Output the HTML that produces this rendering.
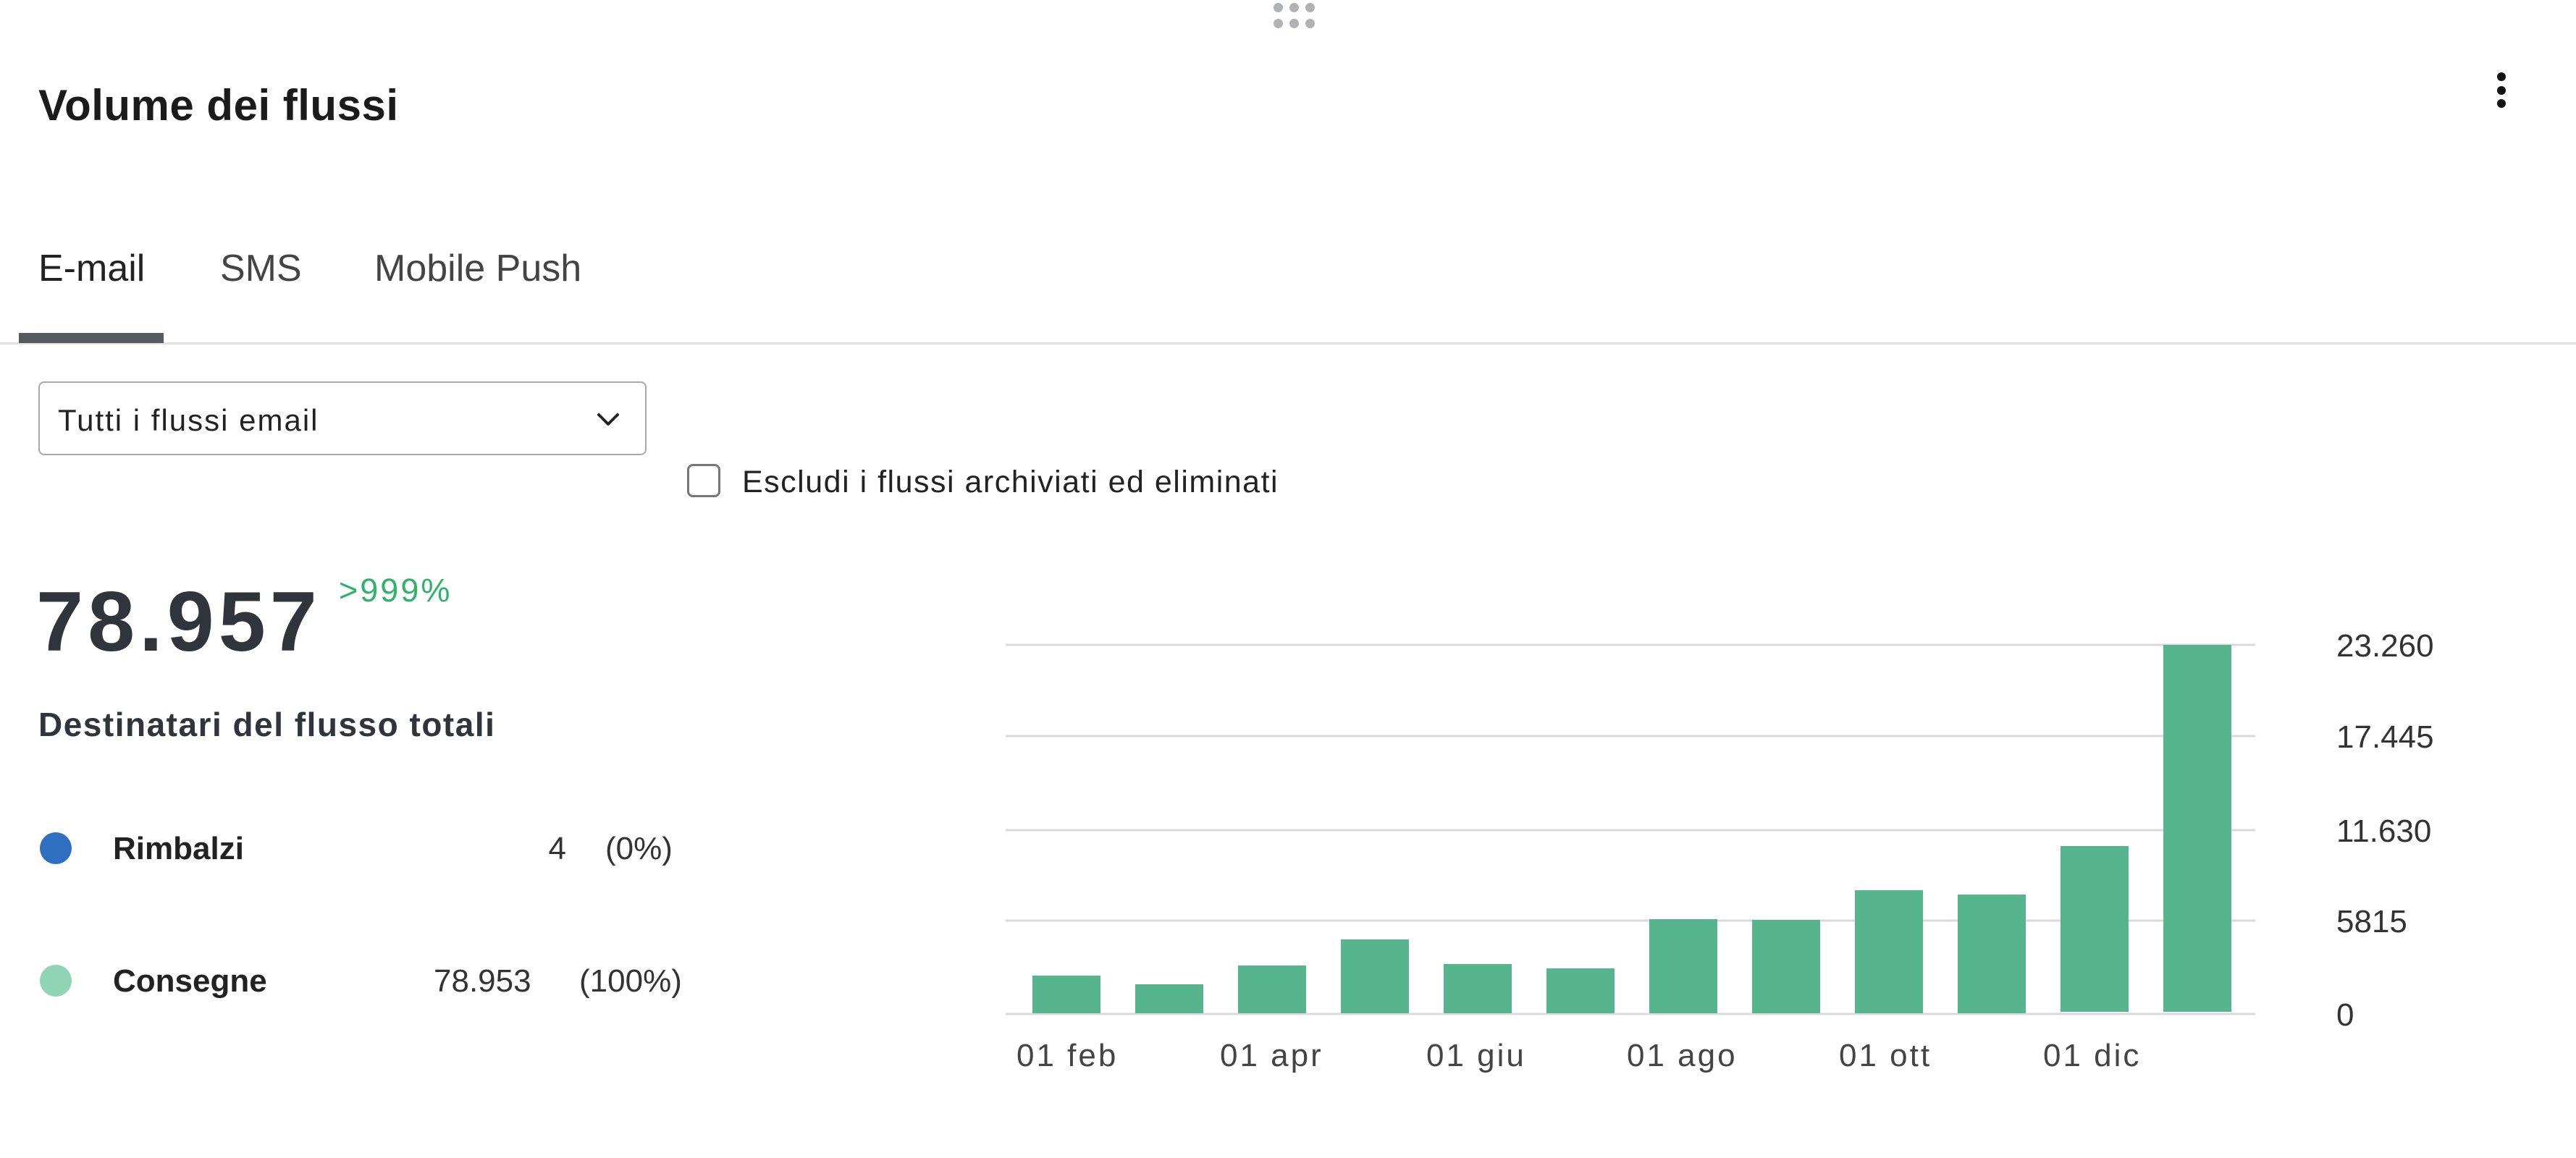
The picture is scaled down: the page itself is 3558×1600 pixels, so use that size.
<!DOCTYPE html>
<html><head><meta charset="utf-8"><style>
html,body{margin:0;padding:0;background:#fff;}
body{width:3558px;height:1600px;position:relative;overflow:hidden;font-family:"Liberation Sans",sans-serif;color:#222;}
.a{position:absolute;line-height:1;white-space:nowrap;}
.dot{position:absolute;border-radius:50%;}
</style></head><body>
<div class="dot" style="left:1759px;top:4px;width:13px;height:13px;background:#b0b2b5"></div>
<div class="dot" style="left:1781px;top:4px;width:13px;height:13px;background:#b0b2b5"></div>
<div class="dot" style="left:1803px;top:4px;width:13px;height:13px;background:#b0b2b5"></div>
<div class="dot" style="left:1759px;top:26px;width:13px;height:13px;background:#b0b2b5"></div>
<div class="dot" style="left:1781px;top:26px;width:13px;height:13px;background:#b0b2b5"></div>
<div class="dot" style="left:1803px;top:26px;width:13px;height:13px;background:#b0b2b5"></div>
<div class="dot" style="left:3449px;top:100px;width:12px;height:12px;background:#111"></div>
<div class="dot" style="left:3449px;top:119px;width:12px;height:12px;background:#111"></div>
<div class="dot" style="left:3449px;top:137px;width:12px;height:12px;background:#111"></div>

<div class="a" style="left:53px;top:116px;font-size:60px;font-weight:bold;color:#1b1b1b;letter-spacing:0.5px">Volume dei flussi</div>

<div class="a" style="left:53px;top:345px;font-size:52px;color:#222">E-mail</div>
<div class="a" style="left:304px;top:345px;font-size:52px;color:#444">SMS</div>
<div class="a" style="left:517px;top:345px;font-size:52px;color:#444">Mobile Push</div>
<div style="position:absolute;left:0;top:473px;width:3558px;height:3px;background:#e2e2e2"></div>
<div style="position:absolute;left:26px;top:460px;width:200px;height:14px;background:#555a5f"></div>

<div style="position:absolute;left:53px;top:527px;width:840px;height:102px;border:2px solid #a9a9a9;border-radius:8px;box-sizing:border-box;"></div>
<div class="a" style="left:80px;top:560px;font-size:42px;color:#222;letter-spacing:2px">Tutti i flussi email</div>
<svg style="position:absolute;left:822px;top:568px" width="36" height="24" viewBox="0 0 36 24"><path d="M5 5 L18 18 L31 5" fill="none" stroke="#222" stroke-width="4" stroke-linecap="round" stroke-linejoin="round"/></svg>

<div style="position:absolute;left:949px;top:641px;width:46px;height:46px;border:3px solid #777;border-radius:8px;box-sizing:border-box"></div>
<div class="a" style="left:1025px;top:645px;font-size:43px;color:#222;letter-spacing:1.5px">Escludi i flussi archiviati ed eliminati</div>

<div class="a" style="left:50px;top:800px;font-size:117px;font-weight:bold;color:#2f353b;letter-spacing:6px">78.957</div>
<div class="a" style="left:468px;top:793px;font-size:45px;color:#2fb36b;letter-spacing:3px">&gt;999%</div>
<div class="a" style="left:53px;top:978px;font-size:46px;font-weight:bold;color:#2f353b;letter-spacing:1.5px">Destinatari del flusso totali</div>

<div class="dot" style="left:55px;top:1150px;width:44px;height:44px;background:#2f6fbf"></div>
<div class="a" style="left:156px;top:1151px;font-size:44px;font-weight:bold;color:#222">Rimbalzi</div>
<div class="a" style="left:756px;top:1151px;width:26px;text-align:right;font-size:44px;color:#333">4</div>
<div class="a" style="left:836px;top:1151px;font-size:44px;color:#333">(0%)</div>

<div class="dot" style="left:55px;top:1333px;width:44px;height:44px;background:#8fd4b4"></div>
<div class="a" style="left:156px;top:1334px;font-size:44px;font-weight:bold;color:#222">Consegne</div>
<div class="a" style="left:599px;top:1334px;font-size:44px;color:#333">78.953</div>
<div class="a" style="left:800px;top:1334px;font-size:44px;color:#333">(100%)</div>

<svg style="position:absolute;left:0;top:0" width="3558" height="1600">
<g stroke="#dadada" stroke-width="3">
<line x1="1389" y1="891" x2="3115" y2="891"/>
<line x1="1389" y1="1017" x2="3115" y2="1017"/>
<line x1="1389" y1="1147" x2="3115" y2="1147"/>
<line x1="1389" y1="1272" x2="3115" y2="1272"/>
<line x1="1389" y1="1401" x2="3115" y2="1401"/>
</g>
<g fill="#56b48e">
<rect x="1426" y="1348" width="94" height="52"/>
<rect x="1568" y="1360" width="94" height="40"/>
<rect x="1710" y="1334" width="94" height="66"/>
<rect x="1852" y="1298" width="94" height="102"/>
<rect x="1994" y="1332" width="94" height="68"/>
<rect x="2136" y="1338" width="94" height="62"/>
<rect x="2278" y="1270" width="94" height="130"/>
<rect x="2420" y="1271" width="94" height="129"/>
<rect x="2562" y="1230" width="94" height="170"/>
<rect x="2704" y="1236" width="94" height="164"/>
<rect x="2846" y="1169" width="94" height="229"/>
<rect x="2988" y="891" width="94" height="507"/>
</g>
<g font-family="Liberation Sans, sans-serif" font-size="44" fill="#333">
<text x="3227" y="907">23.260</text>
<text x="3227" y="1033">17.445</text>
<text x="3227" y="1163">11.630</text>
<text x="3227" y="1288">5815</text>
<text x="3227" y="1417">0</text>
</g>
<g font-family="Liberation Sans, sans-serif" font-size="44" fill="#444" letter-spacing="3">
<text x="1404" y="1473">01 feb</text>
<text x="1685" y="1473">01 apr</text>
<text x="1970" y="1473">01 giu</text>
<text x="2247" y="1473">01 ago</text>
<text x="2540" y="1473">01 ott</text>
<text x="2822" y="1473">01 dic</text>
</g>
</svg>
</body></html>
